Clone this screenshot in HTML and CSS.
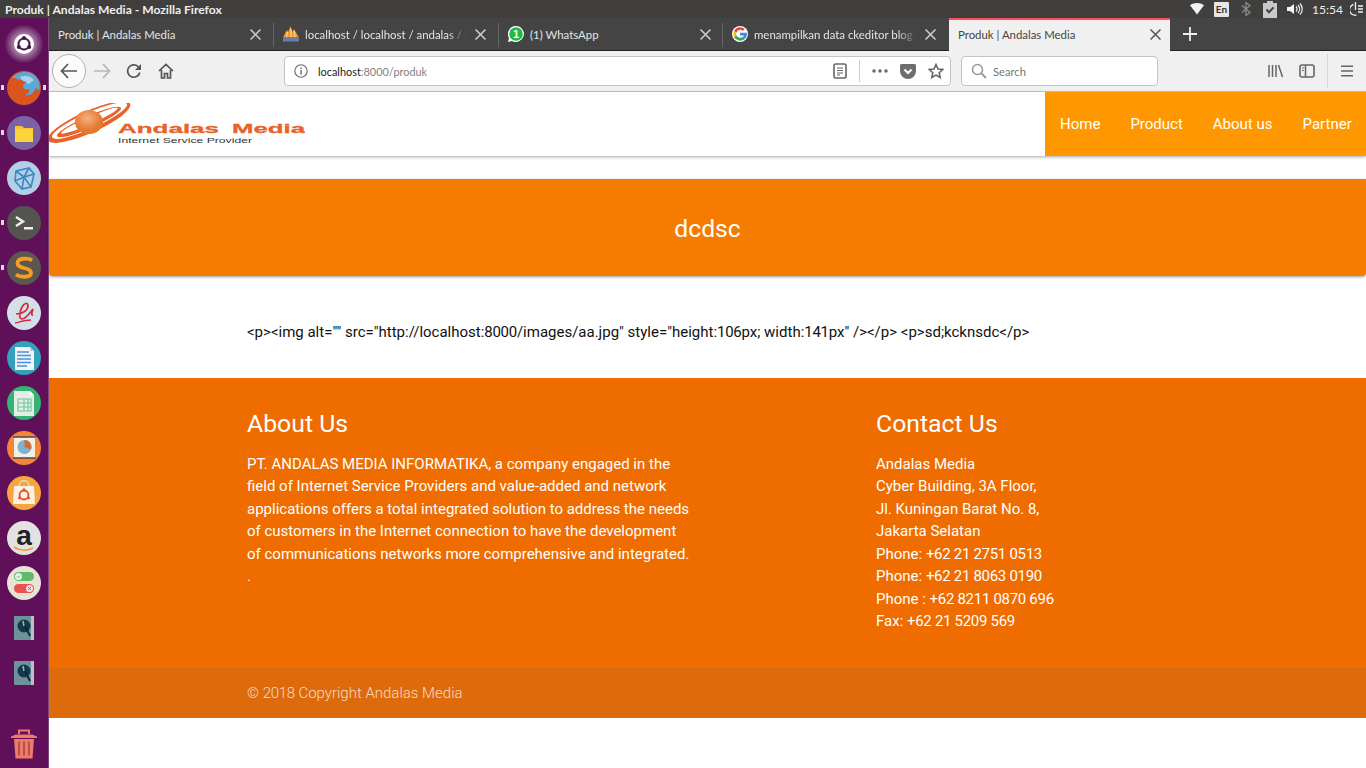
FILE: index.html
```html
<!DOCTYPE html>
<html lang="en">
<head>
<meta charset="utf-8">
<title>Produk | Andalas Media</title>
<link rel="stylesheet" href="styles.css">
</head>
<body>
<div class="topbar">
  <div class="win-title">Produk | Andalas Media - Mozilla Firefox</div>
  <div class="tray">
    <svg class="t-wifi" width="16" height="12" viewBox="0 0 16 12"><path d="M1 2.200C5-.6 11-.6 15 2.200L8 11.500z" fill="#f2f2f2"/></svg>
    <span class="t-en">En</span>
    <svg class="t-bt" width="10" height="14" viewBox="0 0 10 14"><path d="M1 3.500l8 7-4 3V.5l4 3-8 7" fill="none" stroke="#8b8b8b" stroke-width="1.300"/></svg>
    <svg class="t-bat" width="14" height="17" viewBox="0 0 14 17"><path d="M4 0h6v2h4v15H0V2h4z" fill="#c9c9c9"/><path d="M3.500 8.500l2.500 2.800 4.500-5" fill="none" stroke="#3f3f3f" stroke-width="2"/></svg>
    <svg class="t-vol" width="16" height="12" viewBox="0 0 16 12"><path d="M0 4h3l4-3v10L3 8H0z" fill="#f2f2f2"/><path d="M9 3.500a3.500 3.500 0 0 1 0 5M11 2a6 6 0 0 1 0 8M13 .5a8 8 0 0 1 0 11" fill="none" stroke="#f2f2f2" stroke-width="1.200"/></svg>
    <span class="t-time">15:54</span>
    <svg class="t-pow" width="13" height="14" viewBox="0 0 13 14"><path d="M3.500 2.500a5.200 5.200 0 1 0 3 10.500" fill="none" stroke="#f2f2f2" stroke-width="1.300"/><path d="M5.500 0v8M8 4h5M8 7h5M8 10h5" stroke="#f2f2f2" stroke-width="1.300"/></svg>
  </div>
</div>
<div class="desktop">
  <nav class="launcher">
    <div class="li li-first"><svg width="40" height="40" viewBox="0 0 40 40"><defs><radialGradient id="ug"><stop offset="0.4" stop-color="#b89ab6"/><stop offset="1" stop-color="#641860"/></radialGradient></defs><circle cx="20" cy="20" r="19" fill="url(#ug)"/><circle cx="20" cy="20" r="10" fill="#fff"/><circle cx="20" cy="20" r="5.500" fill="none" stroke="#4a1746" stroke-width="2"/><circle cx="20" cy="14" r="2" fill="#4a1746"/><circle cx="14.800" cy="23" r="2" fill="#4a1746"/><circle cx="25.200" cy="23" r="2" fill="#4a1746"/></svg></div>
    <div class="li"><span class="pip pip-l"></span><span class="pip pip-r"></span><svg width="36" height="36" viewBox="0 0 36 36"><circle cx="18" cy="18" r="17" fill="#d9541e"/><path d="M6 8C11 1 25-1 31 8c3 4 3 9 2 13-1-2-3-3-4-2-1 4-5 7-10 6 3-1 5-3 4-6-3 1-6 0-6-3 0-2 2-3 3-4-3 0-4-2-5-3-1 1-3 1-4 0 0-1-3-1-5-1z" fill="#5ea7d6"/><path d="M14 7c5-2 11-1 14 3-2 2-4 2-5 4-2 0-2-2-4-3-2 0-4-1-5-4z" fill="#a9d3ea"/></svg></div>
    <div class="li"><span class="pip pip-l"></span><svg width="36" height="36" viewBox="0 0 36 36"><circle cx="18" cy="18" r="17" fill="#7a63a5"/><path d="M9 11h7l2 2h9v14H9z" fill="#fcc22e"/><path d="M9 14h18v13H9z" fill="#fdd33c"/></svg></div>
    <div class="li"><svg width="36" height="36" viewBox="0 0 36 36"><circle cx="18" cy="18" r="17" fill="#b3cfe8"/><g fill="none" stroke="#3a87c2" stroke-width="1.600"><path d="M10 11l13-3 5 6-3 13-9 2-7-8z"/><path d="M10 11l8 6 10-3M18 17l-2 12M9 21l9-4 7 10M23 8l-5 9"/></g></svg></div>
    <div class="li"><span class="pip pip-l"></span><svg width="36" height="36" viewBox="0 0 36 36"><circle cx="18" cy="18" r="17" fill="#555350"/><path d="M10 12l7 4.500-7 4.500" fill="none" stroke="#eee" stroke-width="2.400"/><path d="M18 22h9v2.500h-9z" fill="#eee"/></svg></div>
    <div class="li"><span class="pip pip-l"></span><svg width="36" height="36" viewBox="0 0 36 36"><circle cx="18" cy="18" r="17" fill="#5c5650"/><path d="M26 10.500c-3-2.500-14-3-14.500 2.500C11 19.500 25 16.500 25 23c-.5 5-11 4.500-15 1.500" fill="none" stroke="#f89c20" stroke-width="3.800"/></svg></div>
    <div class="li"><svg width="36" height="36" viewBox="0 0 36 36"><circle cx="18" cy="18" r="17" fill="#d3e0ea"/><path d="M10 19c7 0 12-4 12-8s-4-3-6 1-4 12 0 12c4 0 7-5 11-10-1 3-2 7 0 6" fill="none" stroke="#d8293a" stroke-width="1.700"/><path d="M9 28c5-1 10-3 16-3" fill="none" stroke="#d8293a" stroke-width="1.300"/></svg></div>
    <div class="li"><svg width="36" height="36" viewBox="0 0 36 36"><circle cx="18" cy="18" r="17" fill="#35a0bd"/><path d="M9 7h15l4 4v19H9z" fill="#f1f4f6"/><path d="M24 7l4 4h-4z" fill="#bcc6cc"/><path d="M11 12h12M11 15.500h14M11 19h14M11 22.500h14M11 26h10" stroke="#4c8fe0" stroke-width="1.500"/></svg></div>
    <div class="li"><svg width="36" height="36" viewBox="0 0 36 36"><circle cx="18" cy="18" r="17" fill="#35b372"/><path d="M8 6h16l4 4v21H8z" fill="#e6ece6"/><path d="M24 6l4 4h-4z" fill="#fff"/><path d="M12 14h13v12H12zM12 18h13M12 22h13M18 14v12M22 14v12" fill="none" stroke="#6fc39c" stroke-width="1.100"/></svg></div>
    <div class="li"><svg width="36" height="36" viewBox="0 0 36 36"><circle cx="18" cy="18" r="17" fill="#f58536"/><path d="M8 7h21v21H8z" fill="#f2eee6"/><path d="M7 7h23M7 28h23" stroke="#544" stroke-width="1.500"/><circle cx="18.500" cy="17" r="7" fill="#7ab4cc"/><path d="M18.500 17V10a7 7 0 0 1 6.500 9.500z" fill="#d8693a"/></svg></div>
    <div class="li"><svg width="36" height="36" viewBox="0 0 36 36"><circle cx="18" cy="18" r="17" fill="#f5a63e"/><path d="M8 11h20l1 18H7z" fill="#fbf0e2"/><path d="M13 11c0-7 10-7 10 0" fill="none" stroke="#e8dccc" stroke-width="1.300"/><circle cx="18" cy="20" r="4.500" fill="none" stroke="#e4502a" stroke-width="1.800"/><circle cx="18" cy="14.800" r="1.500" fill="#e4502a"/><circle cx="13.500" cy="22.800" r="1.500" fill="#e4502a"/><circle cx="22.500" cy="22.800" r="1.500" fill="#e4502a"/></svg></div>
    <div class="li"><svg width="36" height="36" viewBox="0 0 36 36"><circle cx="18" cy="18" r="17" fill="#e2e2e2"/><text x="18" y="25" class="amz">a</text><path d="M8 27c6 4 13 4 19 1" fill="none" stroke="#f39a1f" stroke-width="1.600"/></svg></div>
    <div class="li"><svg width="36" height="36" viewBox="0 0 36 36"><circle cx="18" cy="18" r="17" fill="#e5e4d6"/><rect x="8" y="7" width="20" height="9" rx="4.500" fill="#63b96b"/><circle cx="12.500" cy="11.500" r="3.500" fill="#e8f3e8"/><path d="M11 11.500l1.200 1.200 2-2.200" fill="none" stroke="#63b96b"/><rect x="8" y="19" width="20" height="9" rx="4.500" fill="#ea5252"/><circle cx="23.500" cy="23.500" r="3.500" fill="#f6e0e0"/><path d="M22 22l3 3M25 22l-3 3" stroke="#ea5252"/></svg></div>
    <div class="li"><svg width="20" height="24" viewBox="0 0 20 24"><rect width="20" height="24" rx="1" fill="#6f9199"/><rect x="17" width="3" height="24" fill="#b5c3c6"/><circle cx="10" cy="10" r="6.500" fill="#123a4c"/><path d="M10 8l3 6 3 6" fill="none" stroke="#0d2a36" stroke-width="2"/><path d="M9 5l1 5" stroke="#9fb9bf" stroke-width="1.500"/></svg></div>
    <div class="li"><svg width="20" height="24" viewBox="0 0 20 24"><rect width="20" height="24" rx="1" fill="#6f9199"/><rect x="17" width="3" height="24" fill="#b5c3c6"/><circle cx="10" cy="10" r="6.500" fill="#123a4c"/><path d="M10 8l3 6 3 6" fill="none" stroke="#0d2a36" stroke-width="2"/><path d="M9 5l1 5" stroke="#9fb9bf" stroke-width="1.500"/></svg></div>
    <div class="li li-trash"><svg width="26" height="30" viewBox="0 0 26 30"><path d="M0 7.500l5-2h16l5 2v1.500H0z" fill="#ee7b68"/><path d="M8 5V1.500h10V5" fill="none" stroke="#ee7b68" stroke-width="2"/><path d="M3 10h20l-1.500 19.500h-17z" fill="#ee7b68"/><path d="M8 12.500v14M13 12.500v14M18 12.500v14" stroke="#b6504b" stroke-width="2"/></svg></div>
  </nav>
  <div class="browser">
    <div class="tabstrip">
      <div class="tab tab-1 tab-div"><span class="tab-label">Produk | Andalas Media</span><svg class="x" width="11" height="11" viewBox="0 0 11 11"><path d="M.5.500l10 10M10.500.500l-10 10" stroke="#d0d0d0" stroke-width="1.500"/></svg></div>
      <div class="tab tab-div"><svg class="fav" width="16" height="16" viewBox="0 0 16 16"><path d="M0 11.500L4 3.500l1 3L7.500 0 9.500 6l1.500-3 5 8.500z" fill="#f39a1f"/><path d="M4.500 6l-1 5.500M8 3v8.500M11 5l1 6.500" stroke="#fff" stroke-width=".7"/><rect y="11.500" width="16" height="4" fill="#6b7ca6"/></svg><span class="tab-label fade">localhost / localhost / andalas / pr</span><svg class="x" width="11" height="11" viewBox="0 0 11 11"><path d="M.5.500l10 10M10.500.500l-10 10" stroke="#d0d0d0" stroke-width="1.500"/></svg></div>
      <div class="tab tab-wa tab-div"><svg class="fav" width="16" height="16" viewBox="0 0 16 16"><path d="M8 0a8 8 0 1 1-4 15L0 16l1-4A8 8 0 0 1 8 0z" fill="#fff"/><circle cx="8" cy="8" r="6.800" fill="#1fb944"/><text x="8" y="12" class="wa">1</text></svg><span class="tab-label">(1) WhatsApp</span><svg class="x" width="11" height="11" viewBox="0 0 11 11"><path d="M.5.500l10 10M10.500.500l-10 10" stroke="#d0d0d0" stroke-width="1.500"/></svg></div>
      <div class="tab tab-g"><svg class="fav" width="16" height="16" viewBox="0 0 16 16"><circle cx="8" cy="8" r="8" fill="#fff"/><path d="M8 3.800a4.200 4.200 0 0 1 2.800 1.100l2-2A7 7 0 0 0 2 5l2.300 1.800A4.200 4.200 0 0 1 8 3.800z" fill="#ea4335"/><path d="M4.300 9.200L2 11a7 7 0 0 0 10.800 2L10.600 11A4.200 4.200 0 0 1 4.300 9.200z" fill="#34a853"/><path d="M2 5a7 7 0 0 0 0 6l2.300-1.800a4.200 4.200 0 0 1 0-2.400z" fill="#fbbc05"/><path d="M15 8.200c0-.5 0-1-.2-1.400H8v2.600h4a3.500 3.500 0 0 1-1.400 1.700l2.200 1.800A7 7 0 0 0 15 8.200z" fill="#4285f4"/></svg><span class="tab-label fade">menampilkan data ckeditor blog c</span><svg class="x" width="11" height="11" viewBox="0 0 11 11"><path d="M.5.500l10 10M10.500.500l-10 10" stroke="#d0d0d0" stroke-width="1.500"/></svg></div>
      <div class="tab tab-active"><span class="tab-label">Produk | Andalas Media</span><svg class="x" width="11" height="11" viewBox="0 0 11 11"><path d="M.5.500l10 10M10.500.500l-10 10" stroke="#555" stroke-width="1.500"/></svg></div>
      <svg class="plus" width="14" height="14" viewBox="0 0 14 14"><path d="M7 0v14M0 7h14" stroke="#eee" stroke-width="1.800"/></svg>
    </div>
    <div class="toolbar">
      <div class="back"><svg width="18" height="16" viewBox="0 0 18 16"><path d="M8 1L1.500 8 8 15M2 8h15" fill="none" stroke="#555" stroke-width="1.700"/></svg></div>
      <svg class="fwd" width="18" height="16" viewBox="0 0 18 16"><path d="M10 1l6.500 7-6.500 7M16 8H1" fill="none" stroke="#b5b5b5" stroke-width="1.700"/></svg>
      <svg class="reload" width="16" height="16" viewBox="0 0 16 16"><path d="M13.800 9.500A6.200 6.200 0 1 1 12 3.500L14 5.500" fill="none" stroke="#555" stroke-width="1.700"/><path d="M15 1v6H9z" fill="#555"/></svg>
      <svg class="home" width="16" height="16" viewBox="0 0 16 16"><path d="M1 8l7-6.500L15 8M3.500 7v8h3v-4.500h3V15h3V7" fill="none" stroke="#555" stroke-width="1.700"/></svg>
      <div class="urlbar">
        <svg class="info" width="14" height="14" viewBox="0 0 14 14"><circle cx="7" cy="7" r="6.200" fill="none" stroke="#666" stroke-width="1.100"/><path d="M7 6v4.500M7 3.500v1.500" stroke="#666" stroke-width="1.400"/></svg>
        <span class="url"><span class="url-host">localhost</span>:8000/produk</span>
        <svg class="reader" width="14" height="16" viewBox="0 0 14 16"><rect x="1" y="1" width="12" height="14" rx="1.500" fill="none" stroke="#666" stroke-width="1.600"/><path d="M4 5h6M4 7.500h6M4 10h6M4 12h3" stroke="#666" stroke-width="1"/></svg>
        <span class="ub-sep"></span>
        <svg class="dots" width="16" height="4" viewBox="0 0 16 4"><circle cx="2" cy="2" r="1.700" fill="#666"/><circle cx="8" cy="2" r="1.700" fill="#666"/><circle cx="14" cy="2" r="1.700" fill="#666"/></svg>
        <svg class="pocket" width="16" height="15" viewBox="0 0 16 15"><path d="M1.500 0h13A1.500 1.500 0 0 1 16 1.500V7a8 8 0 0 1-16 0V1.500A1.500 1.500 0 0 1 1.500 0z" fill="#6d6d6d"/><path d="M4.500 5.500L8 9l3.500-3.500" fill="none" stroke="#fff" stroke-width="2"/></svg>
        <svg class="star" width="16" height="16" viewBox="0 0 16 16"><path d="M8 1.500l2 4.500 4.800.5-3.600 3.200 1 4.800L8 12.100l-4.200 2.400 1-4.800L1.200 6.500 6 6z" fill="none" stroke="#666" stroke-width="1.600"/></svg>
      </div>
      <div class="searchbar">
        <svg width="16" height="16" viewBox="0 0 16 16"><circle cx="6.500" cy="6.500" r="5" fill="none" stroke="#999" stroke-width="1.500"/><path d="M10 10l5 5" stroke="#999" stroke-width="1.800"/></svg>
        <span class="search-ph">Search</span>
      </div>
      <div class="tools">
        <svg class="lib" width="16" height="14" viewBox="0 0 16 14"><path d="M1 1v12M4.500 1v12M8 1v12M10.500 1l4 12" stroke="#666" stroke-width="1.500"/></svg>
        <svg class="side" width="16" height="14" viewBox="0 0 16 14"><rect x="1" y="1" width="14" height="12" rx="2" fill="none" stroke="#666" stroke-width="1.600"/><path d="M6.500 1v12" stroke="#666" stroke-width="1.500"/><path d="M3 4h2M3 6.500h2" stroke="#666"/></svg>
        <span class="tool-sep"></span>
        <svg class="menu" width="12" height="12" viewBox="0 0 12 12"><path d="M0 1.200h12M0 6h12M0 10.800h12" stroke="#666" stroke-width="1.600"/></svg>
      </div>
    </div>
    <main class="page">
      <header class="site-nav">
        <a class="logo" href="#">
          <svg width="256" height="44" viewBox="0 0 256 44">
            <defs><radialGradient id="pl" cx="0.45" cy="0.35"><stop offset="0" stop-color="#f4b27e"/><stop offset="1" stop-color="#e5772f"/></radialGradient></defs>
            <g transform="rotate(-24 40 19)">
              <ellipse cx="40" cy="19" rx="45" ry="11" fill="#e8622a"/>
              <ellipse cx="41" cy="18" rx="41" ry="8" fill="#fff"/>
              <ellipse cx="40" cy="19" rx="35" ry="6" fill="#e8622a"/>
              <ellipse cx="41" cy="18" rx="31" ry="3.500" fill="#fff"/>
            </g>
            <ellipse cx="40" cy="19" rx="14" ry="12" fill="url(#pl)"/>
            <text x="69" y="30" class="logo-main" textLength="101" lengthAdjust="spacingAndGlyphs">Andalas</text>
            <text x="183" y="30" class="logo-main" textLength="73" lengthAdjust="spacingAndGlyphs">Media</text>
            <text x="69" y="40" class="logo-sub" textLength="134" lengthAdjust="spacingAndGlyphs">Internet Service Provider</text>
          </svg>
        </a>
        <div class="site-links">
          <a href="#">Home</a>
          <a href="#">Product</a>
          <a href="#">About us</a>
          <a href="#">Partner</a>
        </div>
      </header>
      <section class="hero"><h1>dcdsc</h1></section>
      <section class="content">
        <p>&lt;p&gt;&lt;img alt="" src="http://localhost:<span class="num">8000</span>/images/aa.jpg" style="height:<span class="num">106</span>px; width:<span class="num">141</span>px" /&gt;&lt;/p&gt; &lt;p&gt;sd;kcknsdc&lt;/p&gt;</p>
      </section>
      <footer class="foot">
        <div class="foot-cols">
          <div class="foot-about">
            <h3>About Us</h3>
            <p>PT. ANDALAS MEDIA INFORMATIKA, a company engaged in the field of Internet Service Providers and value-added and network applications offers a total integrated solution to address the needs of customers in the Internet connection to have the development of communications networks more comprehensive and integrated.<br>.</p>
          </div>
          <div class="foot-contact">
            <h3>Contact Us</h3>
            <p>Andalas Media<br>Cyber Building, 3A Floor,<br>Jl. Kuningan Barat No. 8,<br>Jakarta Selatan<br>Phone: <span class="num">+62 21 2751 0513</span><br>Phone: <span class="num">+62 21 8063 0190</span><br>Phone : <span class="num">+62 8211 0870 696</span><br>Fax: <span class="num">+62 21 5209 569</span></p>
          </div>
        </div>
        <div class="copy"><span>© <span class="num">2018</span> Copyright Andalas Media</span></div>
      </footer>
    </main>
  </div>
</div>
</body>
</html>
```
FILE: styles.css
```css
* { box-sizing: border-box; }
html, body { margin: 0; height: 768px; overflow: hidden; }
body { font-family: Lato, "Noto Sans", sans-serif; background: #fff; display: flex; flex-direction: column; }
svg { display: block; flex: none; }

.topbar { height: 18px; background: #403f3e; display: flex; align-items: center; justify-content: space-between; flex: none; }
.win-title { font-size: 12.100px; font-weight: 700; color: #eee; padding-left: 5px; white-space: nowrap; }
.tray { display: flex; align-items: center; color: #eee; font-size: 12px; padding-right: 3px; }
.t-en { width: 15px; height: 15px; background: #e6e6e6; color: #333; font-size: 10px; font-weight: 700; text-align: center; line-height: 15px; border-radius: 1px; margin-left: 9px; }
.t-bt { margin-left: 12px; }
.t-bat { margin-left: 12px; }
.t-vol { margin-left: 10px; }
.t-time { margin-left: 9px; width: 26px; font-size: 12px; }
.t-pow { margin-left: 12px; }

.desktop { flex: 1; display: flex; min-height: 0; }
.launcher { width: 49px; flex: none; background: #5f1058; border-right: 1px solid #80487d; display: flex; flex-direction: column; padding: 2px 0 2px; }
.li { height: 45px; flex: none; display: flex; align-items: center; justify-content: center; position: relative; padding-right: 1px; }
.li-first { padding-top: 2px; }
.li-trash { margin-top: auto; }
.pip { position: absolute; width: 3px; height: 5px; background: #dcdcdc; top: 20px; }
.pip-l { left: 1px; }
.pip-r { right: 2px; }
.amz { font-family: "Liberation Sans", sans-serif; font-size: 28px; font-weight: 700; fill: #222; text-anchor: middle; }
.wa { font-family: "Liberation Sans", sans-serif; font-size: 11px; font-weight: 700; fill: #fff; text-anchor: middle; }

.browser { flex: 1; min-width: 0; display: flex; flex-direction: column; }
.tabstrip { height: 33px; flex: none; background: #444; border-bottom: 1px solid #222; display: flex; align-items: stretch; }
.tab { width: 225px; display: flex; align-items: center; padding: 0 13px 0 9px; font-size: 11.400px; color: #e4e4e4; position: relative; }
.tab-1 { width: 225px; }
.tab-wa { width: 224px; padding-right: 12px; }
.tab-g { width: 226px; }
.tab-div::after { content: ""; position: absolute; right: 0; top: 5px; height: 24px; width: 1px; background: #666; }
.fav { margin-right: 6px; }
.tab-label { flex: 1; min-width: 0; white-space: nowrap; overflow: hidden; }
.fade { -webkit-mask-image: linear-gradient(to right, #000 88%, transparent); mask-image: linear-gradient(to right, #000 88%, transparent); }
.x { margin-left: 8px; }
.tab-active { width: 221px; background: #f0f0f0; color: #444; border-top: 2px solid #ff4f5e; height: 33px; padding: 0 9px 2px 9px; }
.plus { align-self: center; margin-left: 13px; }

.toolbar { height: 41px; flex: none; background: #f0f0f0; border-bottom: 1px solid #c8c8c8; display: flex; align-items: center; }
.back { width: 34px; height: 34px; border-radius: 50%; background: #fbfbfb; border: 1px solid #b1b1b1; display: flex; align-items: center; justify-content: center; margin-left: 3px; }
.fwd { margin-left: 7px; }
.reload { margin-left: 15px; }
.home { margin-left: 16px; }
.urlbar { width: 667px; height: 30px; margin-left: 110px; background: #fff; border: 1px solid #c4c4c4; border-radius: 4px; display: flex; align-items: center; }
.info { margin-left: 9px; }
.url { margin-left: 10px; font-size: 10.900px; color: #7f7f7f; flex: 1; white-space: nowrap; }
.url-host { color: #222; }
.reader { margin-right: 12px; }
.ub-sep { width: 1px; height: 22px; background: #ccc; }
.dots { margin-left: 12px; }
.pocket { margin-left: 12px; }
.star { margin: 0 6px 0 12px; }
.searchbar { width: 197px; height: 30px; margin-left: 10px; background: #fff; border: 1px solid #c4c4c4; border-radius: 4px; display: flex; align-items: center; padding-left: 9px; }
.search-ph { margin-left: 6px; font-size: 11.200px; color: #777; }
.tools { display: flex; align-items: center; margin-left: 110px; }
.side { margin-left: 15px; }
.tool-sep { width: 1px; height: 34px; background: #d8d8d8; margin-left: 12px; }
.menu { margin-left: 13px; }

.page { flex: 1; min-height: 0; font-family: Roboto, sans-serif; color: #222; background: #fff; }
.site-nav { height: 64px; display: flex; justify-content: space-between; background: #fff; box-shadow: 0 1px 3px rgba(0,0,0,.35); position: relative; }
.logo { display: block; padding-top: 11px; }
.logo-main { font-family: "Liberation Sans", sans-serif; font-size: 13.500px; font-weight: 700; fill: #e8622a; stroke: #e8622a; stroke-width: .3px; }
.logo-sub { font-family: "Liberation Sans", sans-serif; font-size: 7px; fill: #333; }
.site-links { background: #ff9800; display: flex; align-items: center; width: 321px; padding-left: 15px; gap: 30px; font-size: 15px; font-weight: 400; }
.site-links a { color: #fff; text-decoration: none; white-space: nowrap; }
.hero { height: 97px; margin-top: 23px; padding-top: 1px; background: #f57c00; border-radius: 0 0 4px 4px; box-shadow: 0 1px 3px rgba(0,0,0,.4); display: flex; align-items: center; justify-content: center; }
.hero h1 { margin: 0; font-size: 24.700px; font-weight: 400; color: #fff; }
.content { height: 102px; padding: 47px 0 0 198px; font-size: 15px; line-height: 18px; color: #111; }
.content p { margin: 0; }
.num { letter-spacing: -.3px; }
.foot { background: #ef6c00; color: #fff; }
.foot-cols { height: 290px; display: flex; padding: 30px 0 0 198px; }
.foot h3 { margin: 0 0 12.700px; font-size: 24.800px; font-weight: 400; line-height: 32px; }
.foot p { margin: 0; font-size: 15px; line-height: 22.500px; }
.foot-about { width: 445px; margin-right: 184px; }
.copy { height: 50px; background: #dd6a0b; display: flex; align-items: center; padding-left: 198px; font-size: 15px; font-weight: 300; color: #f6dcc5; }
```
